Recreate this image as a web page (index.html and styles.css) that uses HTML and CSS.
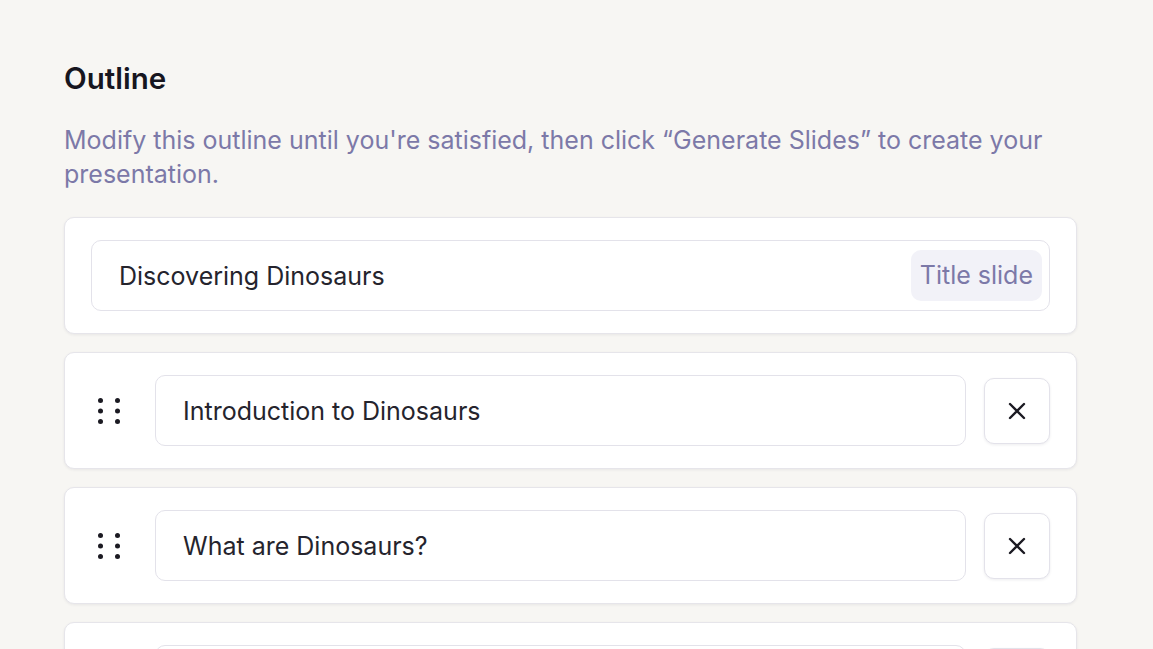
FILE: index.html
```html
<!DOCTYPE html>
<html lang="en">
<head>
<meta charset="utf-8">
<title>Outline</title>
<link rel="stylesheet" href="styles.css">
</head>
<body>
<main class="page">
  <h1 class="title">Outline</h1>
  <p class="desc">Modify this outline until you're satisfied, then click “Generate Slides” to create your presentation.</p>
  <div class="list">
    <div class="card">
      <div class="field">
        <span class="field-text">Discovering Dinosaurs</span>
        <span class="badge">Title slide</span>
      </div>
    </div>
    <div class="card">
      <span class="handle"><svg width="24" height="28" viewBox="0 0 24 28"><g fill="#1b1a22"><circle cx="3.5" cy="3.5" r="2.5"/><circle cx="20.5" cy="3.5" r="2.5"/><circle cx="3.5" cy="14" r="2.5"/><circle cx="20.5" cy="14" r="2.5"/><circle cx="3.5" cy="24.5" r="2.5"/><circle cx="20.5" cy="24.5" r="2.5"/></g></svg></span>
      <div class="field"><span class="field-text">Introduction to Dinosaurs</span></div>
      <button class="remove"><svg width="18" height="18" viewBox="0 0 18 18"><path d="M2 2L16 16M16 2L2 16" stroke="#1b1a22" stroke-width="2.4" stroke-linecap="round"/></svg></button>
    </div>
    <div class="card">
      <span class="handle"><svg width="24" height="28" viewBox="0 0 24 28"><g fill="#1b1a22"><circle cx="3.5" cy="3.5" r="2.5"/><circle cx="20.5" cy="3.5" r="2.5"/><circle cx="3.5" cy="14" r="2.5"/><circle cx="20.5" cy="14" r="2.5"/><circle cx="3.5" cy="24.5" r="2.5"/><circle cx="20.5" cy="24.5" r="2.5"/></g></svg></span>
      <div class="field"><span class="field-text">What are Dinosaurs?</span></div>
      <button class="remove"><svg width="18" height="18" viewBox="0 0 18 18"><path d="M2 2L16 16M16 2L2 16" stroke="#1b1a22" stroke-width="2.4" stroke-linecap="round"/></svg></button>
    </div>
    <div class="card">
      <span class="handle"><svg width="24" height="28" viewBox="0 0 24 28"><g fill="#1b1a22"><circle cx="3.5" cy="3.5" r="2.5"/><circle cx="20.5" cy="3.5" r="2.5"/><circle cx="3.5" cy="14" r="2.5"/><circle cx="20.5" cy="14" r="2.5"/><circle cx="3.5" cy="24.5" r="2.5"/><circle cx="20.5" cy="24.5" r="2.5"/></g></svg></span>
      <div class="field"></div>
      <button class="remove"><svg width="18" height="18" viewBox="0 0 18 18"><path d="M2 2L16 16M16 2L2 16" stroke="#1b1a22" stroke-width="2.4" stroke-linecap="round"/></svg></button>
    </div>
  </div>
</main>
</body>
</html>
```

FILE: styles.css
```css
html, body {
  margin: 0;
  padding: 0;
  background: #f7f6f3;
  font-family: Inter, "Noto Sans", sans-serif;
  overflow: hidden;
}
.page {
  width: 1013px;
  padding: 60px 0 0 64px;
}
.title {
  margin: 0;
  font-size: 29.5px;
  line-height: 36px;
  font-weight: 600;
  color: #17161f;
}
.desc {
  margin: 27px 0 0;
  font-size: 25px;
  line-height: 34px;
  color: #7c79a8;
}
.list {
  margin-top: 26px;
  display: flex;
  flex-direction: column;
  gap: 18px;
}
.card {
  display: flex;
  align-items: center;
  background: #fff;
  border: 1px solid #e6e5ea;
  border-radius: 10px;
  box-shadow: 0 1px 3px rgba(30, 28, 50, 0.07);
  padding: 22px 26px;
  height: 71px;
}
.handle {
  width: 36px;
  display: flex;
  justify-content: center;
  margin-right: 28px;
}
.handle svg { display: block; }
.field {
  flex: 1;
  height: 71px;
  box-sizing: border-box;
  border: 1px solid #e3e2ea;
  border-radius: 10px;
  display: flex;
  align-items: center;
  padding: 0 7px 0 27px;
}
.field-text {
  flex: 1;
  font-size: 25px;
  color: #25242d;
}
.badge {
  background: #f2f2f8;
  color: #7c79a8;
  font-size: 25px;
  height: 51px;
  line-height: 51px;
  padding: 0 9px;
  border-radius: 10px;
}
.remove {
  margin-left: 18px;
  width: 66px;
  height: 66px;
  background: #fff;
  border: 1px solid #e3e2ea;
  border-radius: 10px;
  box-shadow: 0 1px 3px rgba(30, 28, 50, 0.08);
  display: flex;
  align-items: center;
  justify-content: center;
  padding: 0;
}
.remove svg { display: block; }
```
